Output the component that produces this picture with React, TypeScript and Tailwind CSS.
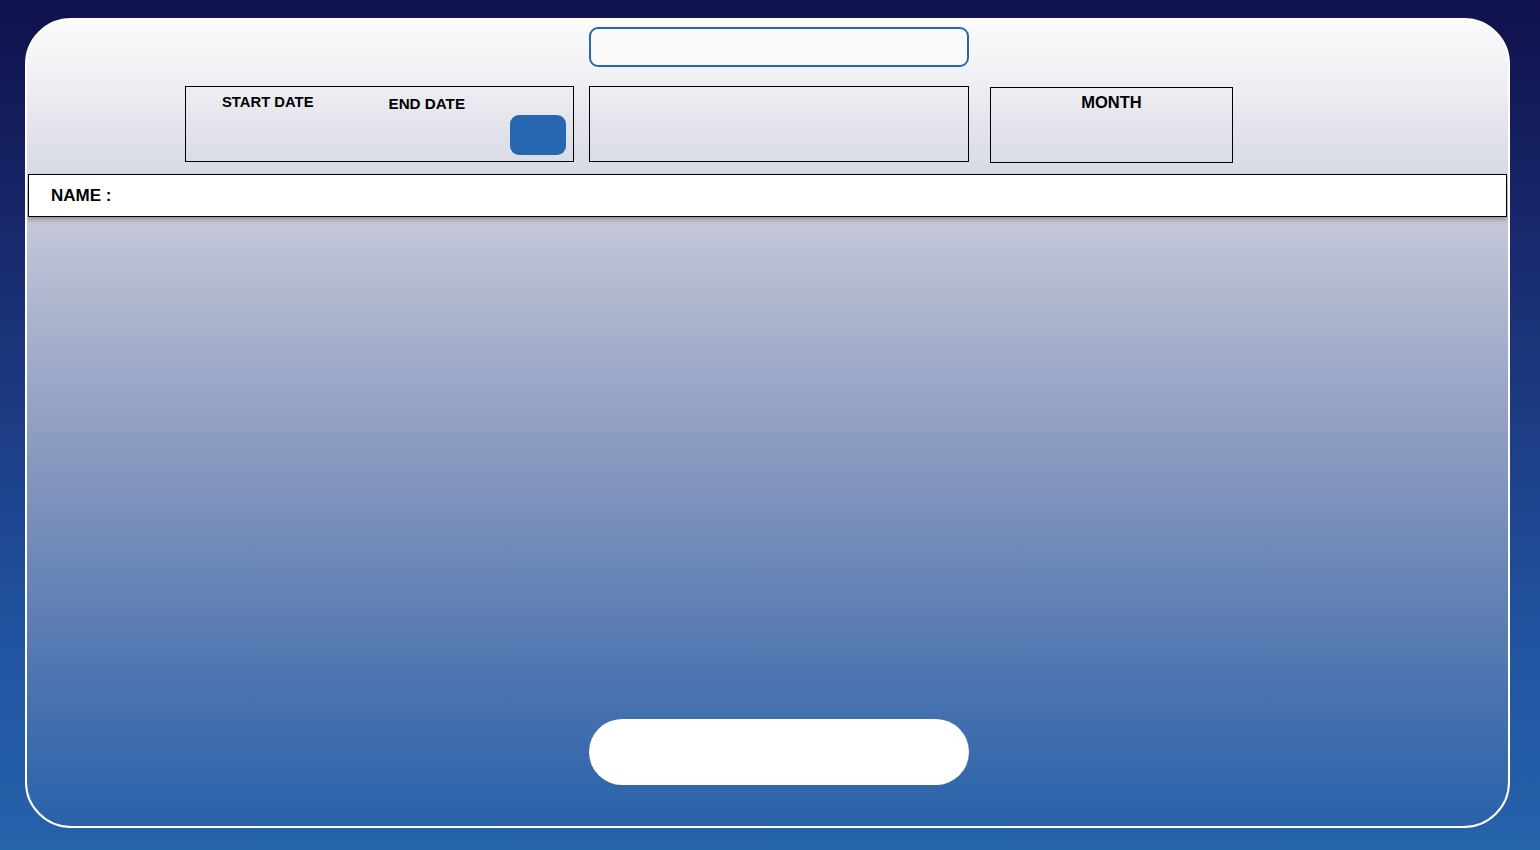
import React from 'react';

const App = () => {
  return (
    <div className="w-[1540px] h-[850px] bg-[linear-gradient(to_bottom,#10114d_0%,#1a2f74_35%,#2153a0_75%,#2563ab_100%)] pt-[18px] pl-[25px] font-['Liberation_Sans',Arial,sans-serif] text-black">
      <div className="w-[1485px] h-[810px] rounded-[46px] border-2 border-white bg-[linear-gradient(to_bottom,#fbfbfc_0%,#f0f0f4_7%,#d7d9e4_19%,#c4c7d8_25%,#a9b1cc_38%,#7c91bb_60%,#4d74b0_82%,#2862aa_100%)] flex flex-col overflow-hidden">
        {/* search field */}
        <div className="ml-[562px] mt-[7px] w-[380px] h-[40px] rounded-[9px] border-2 border-[#2a66ad] bg-[#fafafa]" />

        {/* filters */}
        <div className="flex items-start mt-[19px] ml-[158px]">
          <div className="w-[389px] h-[76px] border border-black flex flex-col">
            <div className="flex items-start pl-[36px] pt-[8px]">
              <span className="text-[14.8px] font-bold leading-none">START DATE</span>
              <span className="ml-[75px] mt-[1px] text-[15.2px] font-bold leading-none">END DATE</span>
            </div>
            <button className="mt-auto self-end mr-[7px] mb-[6px] w-[56px] h-[40px] rounded-[9px] bg-[#2766b0]" />
          </div>
          <div className="ml-[15px] w-[380px] h-[76px] border border-black" />
          <div className="ml-[21px] mt-[1px] w-[243px] h-[76px] border border-black flex justify-center pt-[6px]">
            <span className="text-[16.5px] font-bold leading-none">MONTH</span>
          </div>
        </div>

        {/* name bar */}
        <div className="mt-[11px] mx-[1px] h-[43px] bg-white border border-black flex items-center pl-[22px] shadow-[0_3px_4px_rgba(0,0,0,0.25)]">
          <span className="text-[17px] font-bold leading-none">NAME :</span>
        </div>

        {/* submit pill */}
        <div className="mt-auto mb-[41px] ml-[562px] w-[380px] h-[66px] rounded-full bg-white" />
      </div>
    </div>
  );
};

export default App;
